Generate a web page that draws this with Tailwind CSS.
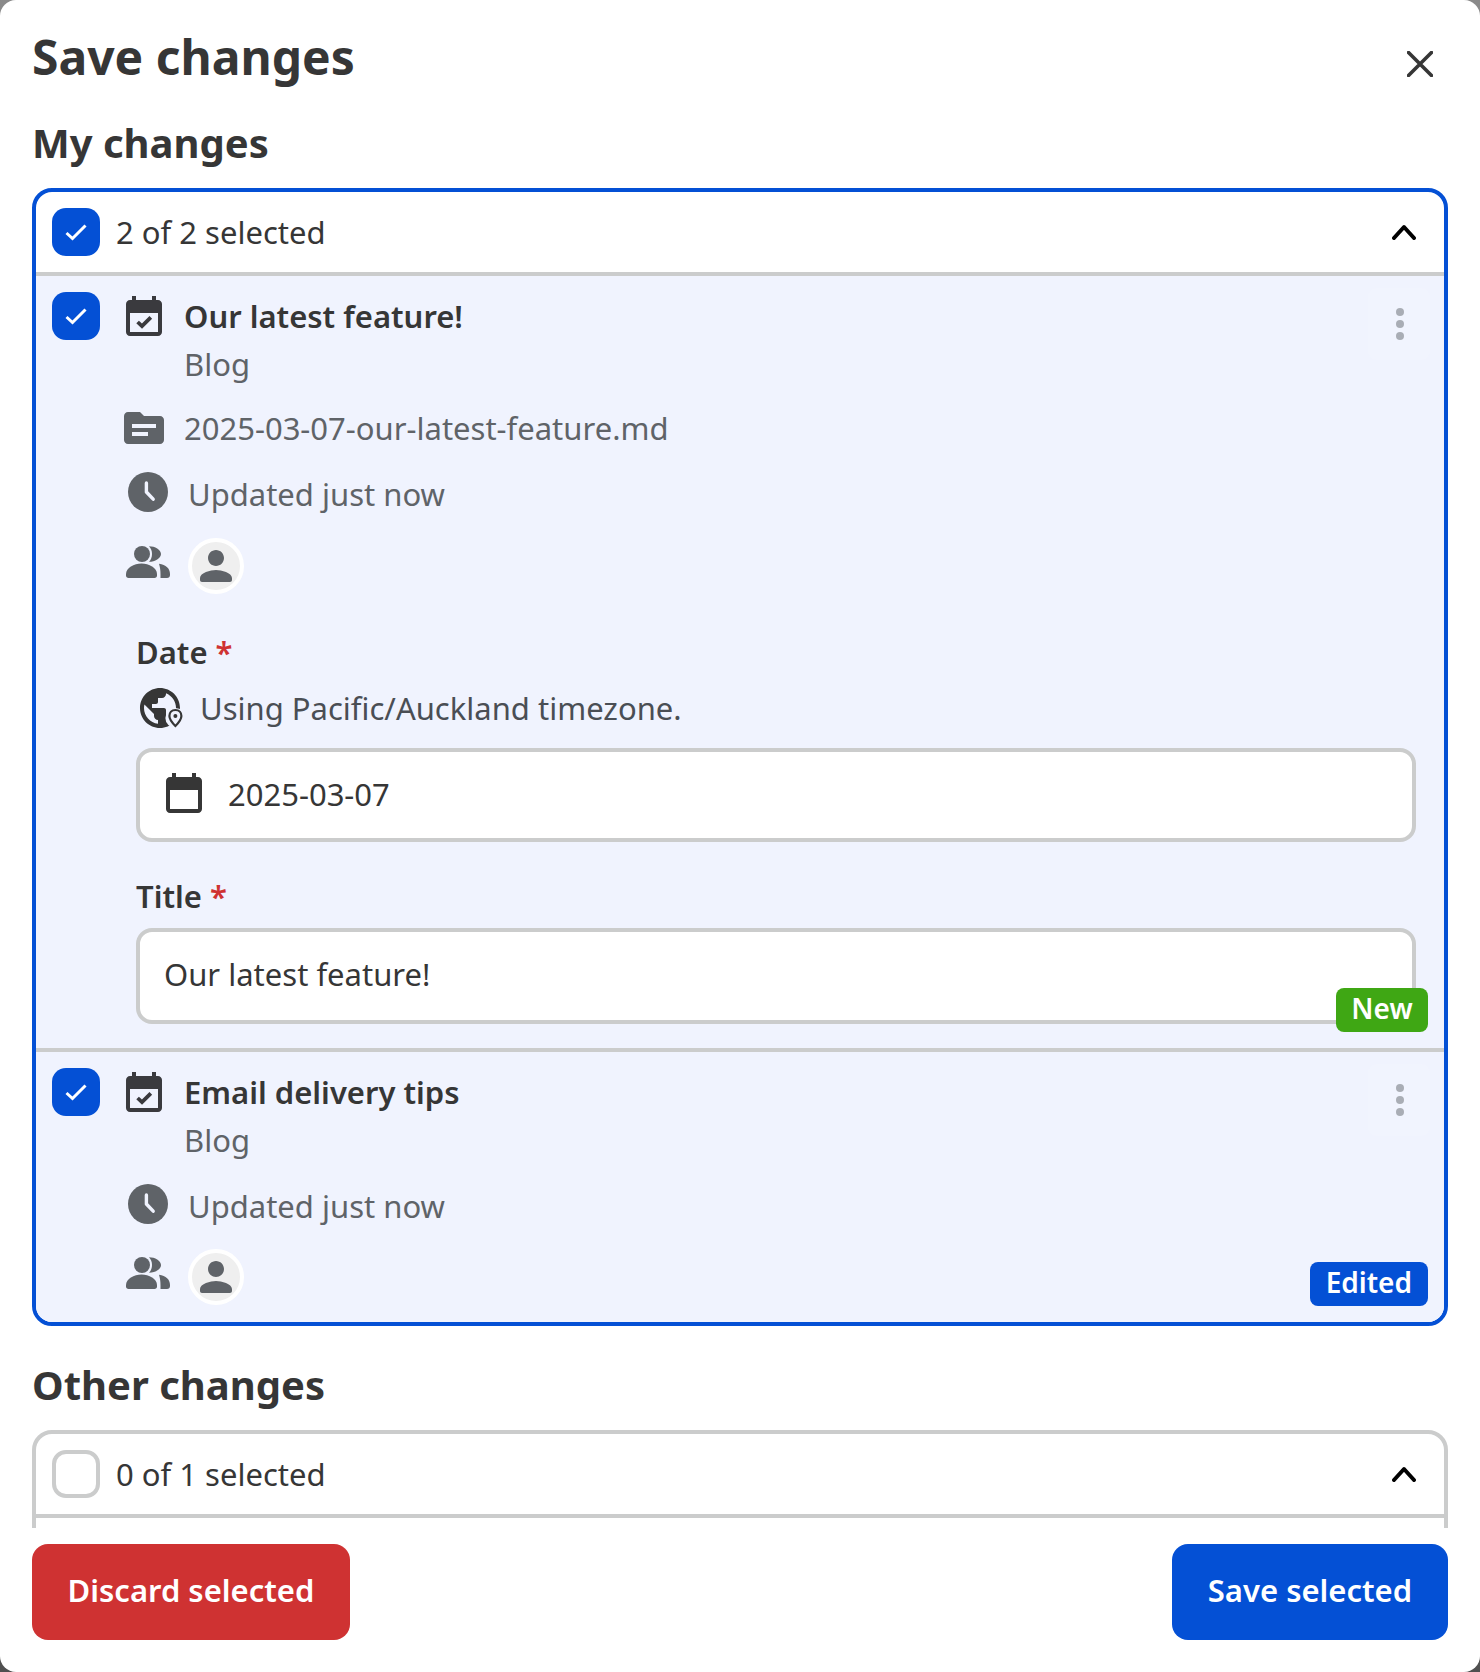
<!DOCTYPE html>
<html lang="en">
<head>
    <meta charset="UTF-8">
    <title>Save changes</title>
    <script src="https://cdn.jsdelivr.net/npm/@tailwindcss/browser@4"></script>
</head>
<body class="bg-linear-to-b from-[#8a8a8a] to-[#505050] font-['Noto_Sans',sans-serif] text-[#363636]">
    <div class="w-[1480px] h-[1672px] bg-white rounded-[16px] flex flex-col overflow-hidden">
        <!-- Title -->
        <div class="flex justify-between px-[32px] pt-[24px] shrink-0">
            <h1 class="text-[48px] leading-[66px] font-bold">Save changes</h1>
            <svg class="mt-[27px] mr-[15px]" width="26" height="26" viewBox="0 0 26 26" fill="none" stroke="#363636" stroke-width="3.6" stroke-linecap="round"><path d="M1.5 1.5l23 23M24.5 1.5l-23 23"/></svg>
        </div>

        <div class="flex-1 overflow-hidden px-[32px]">
            <h2 class="text-[40px] leading-[52px] font-bold mt-[27px] mb-[19px]">My changes</h2>

            <!-- My changes -->
            <div class="border-[4px] border-[#0450d5] rounded-[20px] overflow-hidden">
                <div class="h-[80px] flex items-center pl-[16px] pr-[28px]">
                    <div class="w-[48px] h-[48px] rounded-[14px] bg-[#0450d5]">
                        <svg width="48" height="48" viewBox="0 0 48 48" fill="none" stroke="#fff" stroke-width="3"><path d="M14.5 25l6 5.5 13-13"/></svg>
                    </div>
                    <span class="ml-[16px] text-[31px] flex-1">2 of 2 selected</span>
                    <svg width="24" height="16" viewBox="0 0 24 16" fill="none" stroke="#000" stroke-width="4" stroke-linecap="round" stroke-linejoin="round"><path d="M2 14L12 3l10 11"/></svg>
                </div>

                <!-- Item 1 -->
                <div class="relative border-t-[4px] border-[#cbcccc] bg-[#f0f3fe] h-[776px] pt-[16px]">
                    <button class="absolute top-[12px] right-[14px] w-[62px] h-[72px] rounded-[8px] bg-[#f1f4fe] flex flex-col items-center justify-center gap-[4px] pl-[2px]">
                        <span class="w-[8px] h-[8px] rounded-full bg-[#a9adb5]"></span>
                        <span class="w-[8px] h-[8px] rounded-full bg-[#a9adb5]"></span>
                        <span class="w-[8px] h-[8px] rounded-full bg-[#a9adb5]"></span>
                    </button>
                    <div class="flex pl-[16px]">
                        <div class="w-[48px] h-[48px] rounded-[14px] bg-[#0450d5] shrink-0">
                            <svg width="48" height="48" viewBox="0 0 48 48" fill="none" stroke="#fff" stroke-width="3"><path d="M14.5 25l6 5.5 13-13"/></svg>
                        </div>
                        <svg class="ml-[20px] mt-[2px]" width="48" height="48" viewBox="0 0 24 24" fill="#3a3a3e"><path d="M19 3h-1V1h-2v2H8V1H6v2H5c-1.11 0-1.99.9-1.99 2L3 19c0 1.1.89 2 2 2h14c1.1 0 2-.9 2-2V5c0-1.1-.9-2-2-2zm0 16H5V9.500h14V19z"/><path d="M8.8 14l2.200 2.100 4.400-4.400" fill="none" stroke="#3a3a3e" stroke-width="1.900"/></svg>
                        <div class="ml-[16px]">
                            <div class="text-[31px] leading-[48px] font-semibold">Our latest feature!</div>
                            <div class="text-[31px] leading-[48px] text-[#5f6368]">Blog</div>
                        </div>
                    </div>
                    <div class="flex items-center h-[48px] mt-[16px] pl-[84px] text-[31px] text-[#5f6368]">
                        <svg width="48" height="48" viewBox="0 0 24 24" fill="#5f6368"><path d="M20 6h-8l-2-2H4c-1.1 0-1.99.9-1.99 2L2 18c0 1.1.9 2 2 2h16c1.1 0 2-.9 2-2V8c0-1.1-.9-2-2-2zm-6 10H6v-2h8v2zm4-4H6v-2h12v2z"/></svg>
                        <span class="ml-[16px]">2025-03-07-our-latest-feature.md</span>
                    </div>
                    <div class="flex items-center h-[48px] mt-[16px] pl-[88px] text-[31px] text-[#5f6368]">
                        <svg width="48" height="48" viewBox="0 0 24 24"><circle cx="12" cy="12" r="10" fill="#5f6368"/><path d="M11.2 7.5V12l3.4 3.6" fill="none" stroke="#f0f3fe" stroke-width="1.7" stroke-linecap="round" stroke-linejoin="round"/></svg>
                        <span class="ml-[16px] pt-[5px]">Updated just now</span>
                    </div>
                    <div class="flex items-center h-[56px] mt-[22px] pl-[90px]">
                        <svg class="shrink-0 mb-[8px]" width="44" height="32" viewBox="0 0 44 32" fill="#5f6368"><circle cx="16" cy="8" r="8"/><path d="M0 28c0-6 8-10.500 15.500-10.500S31 22 31 28v1.500c0 1.500-1 2.500-2.500 2.500h-26C1 32 0 31 0 29.500z"/><path d="M23 .2c6 0 12 3.500 12 7.800s-6 7.800-12 7.800c2-2 3-4.800 3-7.800s-1-5.800-3-7.800z"/><path d="M33 17.800c7 .7 11 5 11 10.200v1c0 1.800-1.200 3-3 3h-6.500v-3.500c0-4-.5-7.500-1.500-10.700z"/></svg>
                        <div class="ml-[18px] w-[56px] h-[56px] rounded-full bg-[#efefef] border-[4px] border-white flex items-center justify-center shrink-0">
                            <svg width="48" height="48" viewBox="0 0 24 24" fill="#5f6368" class="shrink-0"><path d="M12 12c2.210 0 4-1.790 4-4s-1.790-4-4-4-4 1.790-4 4 1.790 4 4 4zm0 2c-2.670 0-8 1.340-8 4v1c0 .550.450 1 1 1h14c.550 0 1-.450 1-1v-1c0-2.660-5.330-4-8-4z"/></svg>
                        </div>
                    </div>

                    <!-- Date -->
                    <div class="ml-[100px] mr-[28px] mt-[36px]">
                        <div class="text-[31px] leading-[44px] font-semibold">Date <span class="text-[#cf3232]">*</span></div>
                        <div class="flex items-center h-[48px] mt-[10px] text-[31px] text-[#4a4e54]">
                            <svg width="48" height="48" viewBox="0 0 24 24" fill="#363636" class="shrink-0"><path d="M12 2C6.480 2 2 6.480 2 12s4.480 10 10 10 10-4.480 10-10S17.520 2 12 2zm-1 17.930c-3.950-.490-7-3.850-7-7.930 0-.620.080-1.210.210-1.790L9 15v1c0 1.100.900 2 2 2v1.930zm6.900-2.540c-.260-.810-1-1.390-1.900-1.390h-1v-3c0-.550-.450-1-1-1H8v-2h2c.550 0 1-.450 1-1V7h2c1.100 0 2-.900 2-2v-.410c2.930 1.190 5 4.060 5 7.410 0 2.080-.800 3.970-2.100 5.390z"/><circle cx="19.700" cy="17" r="5" fill="#f0f3fe"/><path d="M19.700 13c-1.900 0-3 1.400-3 3 0 2 3 5 3 5s3-3 3-5c0-1.600-1.100-3-3-3z" fill="#f0f3fe" stroke="#363636" stroke-width="1.100"/><circle cx="19.700" cy="16" r="1" fill="#363636"/></svg>
                            <span class="ml-[16px] pt-[1px]">Using Pacific/Auckland timezone.</span>
                        </div>
                        <div class="mt-[16px] h-[94px] border-[4px] border-[#cbcccc] rounded-[16px] bg-white flex items-center pl-[20px] text-[31px]">
                            <svg width="48" height="48" viewBox="0 0 24 24" fill="#363636" class="shrink-0"><path d="M19 3h-1V1h-2v2H8V1H6v2H5c-1.100 0-2 .900-2 2v14c0 1.100.900 2 2 2h14c1.100 0 2-.900 2-2V5c0-1.100-.900-2-2-2zm0 16H5V9.500h14V19z"/></svg>
                            <span class="ml-[20px] pb-[2px]">2025-03-07</span>
                        </div>

                        <div class="text-[31px] leading-[44px] font-semibold mt-[32px]">Title <span class="text-[#cf3232]">*</span></div>
                        <div class="mt-[10px] h-[96px] border-[4px] border-[#cbcccc] rounded-[16px] bg-white flex items-center pl-[24px] pb-[4px] text-[31px]">Our latest feature!</div>
                    </div>
                    <span class="absolute right-[16px] bottom-[16px] h-[44px] w-[92px] text-center rounded-[8px] bg-[#3fa714] text-white text-[28px] leading-[40px] font-semibold">New</span>
                </div>

                <!-- Item 2 -->
                <div class="relative border-t-[4px] border-[#cbcccc] bg-[#f0f3fe] h-[274px] pt-[16px]">
                    <button class="absolute top-[12px] right-[14px] w-[62px] h-[72px] rounded-[8px] bg-[#f1f4fe] flex flex-col items-center justify-center gap-[4px] pl-[2px]">
                        <span class="w-[8px] h-[8px] rounded-full bg-[#a9adb5]"></span>
                        <span class="w-[8px] h-[8px] rounded-full bg-[#a9adb5]"></span>
                        <span class="w-[8px] h-[8px] rounded-full bg-[#a9adb5]"></span>
                    </button>
                    <div class="flex pl-[16px]">
                        <div class="w-[48px] h-[48px] rounded-[14px] bg-[#0450d5] shrink-0">
                            <svg width="48" height="48" viewBox="0 0 48 48" fill="none" stroke="#fff" stroke-width="3"><path d="M14.5 25l6 5.5 13-13"/></svg>
                        </div>
                        <svg class="ml-[20px] mt-[2px]" width="48" height="48" viewBox="0 0 24 24" fill="#3a3a3e"><path d="M19 3h-1V1h-2v2H8V1H6v2H5c-1.11 0-1.99.9-1.99 2L3 19c0 1.1.89 2 2 2h14c1.1 0 2-.9 2-2V5c0-1.1-.9-2-2-2zm0 16H5V9.500h14V19z"/><path d="M8.8 14l2.200 2.100 4.400-4.400" fill="none" stroke="#3a3a3e" stroke-width="1.900"/></svg>
                        <div class="ml-[16px]">
                            <div class="text-[31px] leading-[48px] font-semibold">Email delivery tips</div>
                            <div class="text-[31px] leading-[48px] text-[#5f6368]">Blog</div>
                        </div>
                    </div>
                    <div class="flex items-center h-[48px] mt-[16px] pl-[88px] text-[31px] text-[#5f6368]">
                        <svg width="48" height="48" viewBox="0 0 24 24"><circle cx="12" cy="12" r="10" fill="#5f6368"/><path d="M11.2 7.5V12l3.4 3.6" fill="none" stroke="#f0f3fe" stroke-width="1.7" stroke-linecap="round" stroke-linejoin="round"/></svg>
                        <span class="ml-[16px] pt-[5px]">Updated just now</span>
                    </div>
                    <div class="flex items-center h-[56px] mt-[21px] pl-[90px]">
                        <svg class="shrink-0 mb-[8px]" width="44" height="32" viewBox="0 0 44 32" fill="#5f6368"><circle cx="16" cy="8" r="8"/><path d="M0 28c0-6 8-10.500 15.500-10.500S31 22 31 28v1.500c0 1.500-1 2.500-2.500 2.500h-26C1 32 0 31 0 29.500z"/><path d="M23 .2c6 0 12 3.500 12 7.800s-6 7.800-12 7.800c2-2 3-4.800 3-7.800s-1-5.800-3-7.800z"/><path d="M33 17.800c7 .7 11 5 11 10.200v1c0 1.800-1.200 3-3 3h-6.500v-3.500c0-4-.5-7.500-1.500-10.700z"/></svg>
                        <div class="ml-[18px] w-[56px] h-[56px] rounded-full bg-[#efefef] border-[4px] border-white flex items-center justify-center shrink-0">
                            <svg width="48" height="48" viewBox="0 0 24 24" fill="#5f6368" class="shrink-0"><path d="M12 12c2.210 0 4-1.790 4-4s-1.790-4-4-4-4 1.790-4 4 1.790 4 4 4zm0 2c-2.670 0-8 1.340-8 4v1c0 .550.450 1 1 1h14c.550 0 1-.450 1-1v-1c0-2.660-5.330-4-8-4z"/></svg>
                        </div>
                    </div>
                    <span class="absolute right-[16px] bottom-[16px] h-[44px] px-[16px] rounded-[8px] bg-[#0450d5] text-white text-[28px] leading-[41px] font-semibold">Edited</span>
                </div>
            </div>

            <h2 class="text-[40px] leading-[52px] font-bold mt-[33px] mb-[19px]">Other changes</h2>

            <!-- Other changes -->
            <div class="border-[4px] border-[#cbcccc] rounded-[20px]">
                <div class="h-[80px] flex items-center pl-[16px] pr-[28px]">
                    <div class="w-[48px] h-[48px] rounded-[14px] bg-white border-[4px] border-[#cbcccc]"></div>
                    <span class="ml-[16px] text-[31px] flex-1">0 of 1 selected</span>
                    <svg width="24" height="16" viewBox="0 0 24 16" fill="none" stroke="#000" stroke-width="4" stroke-linecap="round" stroke-linejoin="round"><path d="M2 14L12 3l10 11"/></svg>
                </div>
                <div class="border-t-[4px] border-[#cbcccc] h-[200px]"></div>
            </div>
        </div>

        <!-- Footer -->
        <div class="flex justify-between px-[32px] pt-[16px] pb-[32px] shrink-0">
            <button class="h-[96px] w-[318px] rounded-[16px] bg-[#cf3232] text-white text-[31px] font-semibold pb-[3px]">Discard selected</button>
            <button class="h-[96px] w-[276px] rounded-[16px] bg-[#0450d5] text-white text-[31px] font-semibold pb-[3px]">Save selected</button>
        </div>
    </div>
</body>
</html>
